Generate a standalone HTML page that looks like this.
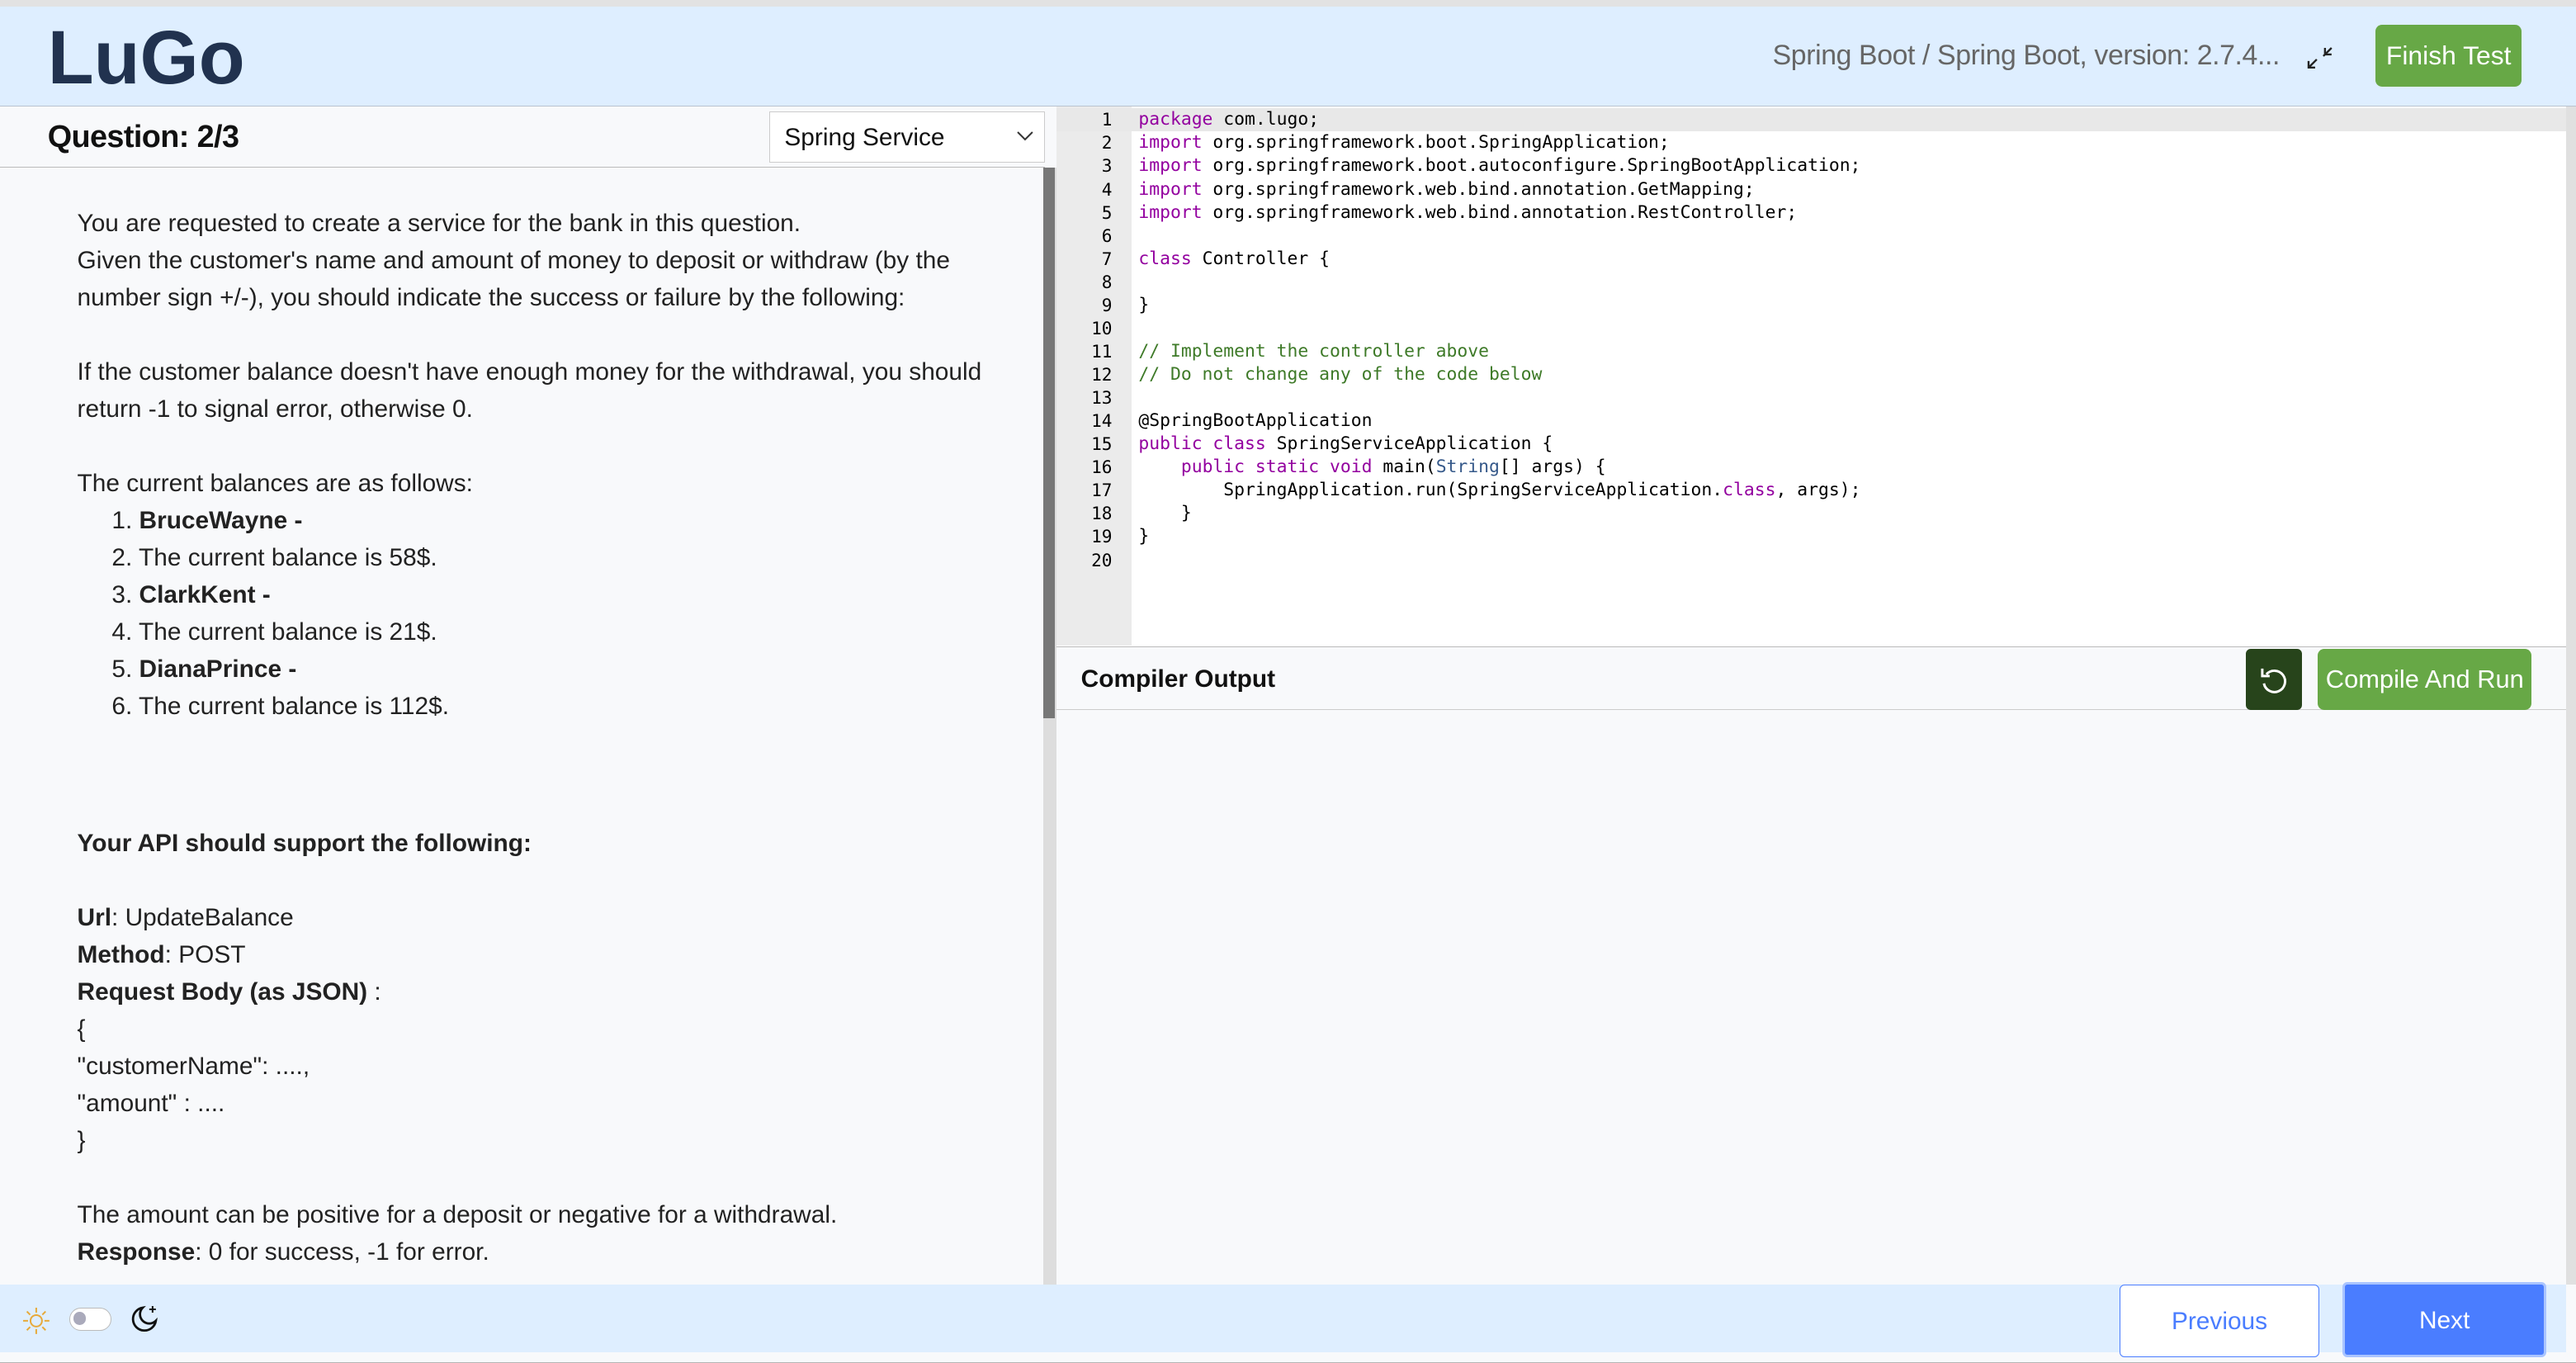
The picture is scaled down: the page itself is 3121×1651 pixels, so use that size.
<!DOCTYPE html>
<html><head><meta charset="utf-8"><style>
*{box-sizing:border-box;margin:0;padding:0}
html,body{width:3121px;height:1651px;overflow:hidden;background:#b5b5b5}
#w{zoom:1.9904;width:1568px;height:829px;position:relative;font-family:"Liberation Sans",sans-serif;background:#f8f9fb}
.abs{position:absolute}
#top{left:0;top:0;width:1568px;height:4px;background:#e2e2e2}
#hdr{left:0;top:4px;width:1568px;height:61px;background:#deeeff;border-bottom:1px solid #b9c3cf}
#logo{left:29px;top:9px;font-size:46px;font-weight:bold;color:#21324f;letter-spacing:0px}
#ver{left:1079px;top:24px;font-size:17px;color:#666;letter-spacing:-0.2px}
#fin{left:1446px;top:15px;width:89px;height:38px;background:#67a846;border-radius:4px;color:#fff;font-size:16px;text-align:center;line-height:38px}
#qbar{left:0;top:65px;width:636px;height:37px;background:#f8f9fb;border-bottom:1px solid #bbb}
#qt{left:29px;top:73px;font-size:19px;font-weight:bold;color:#111;letter-spacing:-0.3px}
#sel{left:468px;top:68px;width:168px;height:31px;background:#fff;border:1px solid #ccc;font-size:15px;padding:7px 0 0 9px;color:#111}
#cont{left:47px;top:125px;width:570px;font-size:15px;line-height:22.6px;color:#222}
#cont p{margin:0}
#sb{left:635px;top:102px;width:8px;height:680px;background:#ddd}
#sbt{left:635px;top:102px;width:7px;height:335px;background:#777}
#ed{left:643px;top:65px;width:919px;height:329px;background:#fff;border-bottom:1px solid #bbb}
#gut{left:643px;top:65px;width:46px;height:328px;background:#ebebeb}
#act{left:643px;top:66px;width:919px;height:14px;background:#e8e8e8}
pre{font-family:"DejaVu Sans Mono","Liberation Mono",monospace;font-size:10.6px;line-height:14.1px;color:#000}
#ln{left:650px;top:66px;width:27px;text-align:right}
#code{left:693px;top:66px;font-size:10.75px}
.k{color:#93009f}.c{color:#3e7a28}.t{color:#36598a}
#cobar{left:643px;top:394px;width:919px;height:38px;background:#f8f9fb;border-bottom:1px solid #ccc}
#cot{left:658px;top:405px;font-size:15px;font-weight:bold;color:#111}
#rst{left:1367px;top:395px;width:34px;height:37px;background:#27441b;border-radius:3px}
#cr{left:1411px;top:395px;width:130px;height:37px;background:#67a846;border-radius:4px;color:#fff;font-size:15.5px;text-align:center;line-height:37px}
#out{left:643px;top:432px;width:919px;height:350px;background:#f8f9fb}
#rs{left:1562px;top:65px;width:6px;height:717px;background:#e0e0e0}
#ftr{left:0;top:782px;width:1562px;height:41px;background:#deeeff}
#prev{left:1290px;top:782px;width:122px;height:44px;background:#fff;border:1px solid #4a7dff;border-radius:3px;color:#4a7dff;font-size:15px;text-align:center;line-height:44px}
#next{left:1426px;top:780px;width:124px;height:46px;background:#4a7dff;border:2px solid #a9c4ff;border-radius:3px;color:#fff;font-size:15px;text-align:center;line-height:44px}
#tog{left:42px;top:796px;width:26px;height:14px;border:1px solid #bbb;border-radius:7px;background:#fff}
#tog:after{content:"";position:absolute;left:2px;top:2px;width:8px;height:8px;border-radius:50%;background:#aab}
</style></head><body><div id="w">
<div id="top" class="abs"></div>
<div id="hdr" class="abs"></div>
<div id="logo" class="abs">LuGo</div>
<div id="ver" class="abs">Spring Boot / Spring Boot, version: 2.7.4...</div>
<svg class="abs" style="left:1403px;top:27px" width="18" height="16" viewBox="0 0 18 16"><path d="M2 14l5-5M2 10v4h4M16 2l-5 5M16 6h-4V2" stroke="#222" stroke-width="1.2" fill="none"/></svg>
<div id="fin" class="abs">Finish Test</div>
<div id="qbar" class="abs"></div>
<div id="qt" class="abs">Question: 2/3</div>
<div id="sel" class="abs">Spring Service<svg style="position:absolute;right:6px;top:11px" width="11" height="7"><path d="M1 1l4.5 4.5L10 1" stroke="#333" fill="none"/></svg></div>
<div id="cont" class="abs">
<p>You are requested to create a service for the bank in this question.<br>Given the customer's name and amount of money to deposit or withdraw (by the number sign +/-), you should indicate the success or failure by the following:</p><br>
<p>If the customer balance doesn't have enough money for the withdrawal, you should return -1 to signal error, otherwise 0.</p><br>
<p>The current balances are as follows:</p>
<div style="padding-left:21px">1. <b>BruceWayne -</b><br>2. The current balance is 58$.<br>3. <b>ClarkKent -</b><br>4. The current balance is 21$.<br>5. <b>DianaPrince -</b><br>6. The current balance is 112$.</div>
<div style="height:61px"></div>
<p><b>Your API should support the following:</b></p><br>
<p><b>Url</b>: UpdateBalance<br><b>Method</b>: POST<br><b>Request Body (as JSON)</b> :<br>{<br>"customerName": ....,<br>"amount" : ....<br>}</p><br>
<p>The amount can be positive for a deposit or negative for a withdrawal.<br><b>Response</b>: 0 for success, -1 for error.</p>
</div>
<div id="sb" class="abs"></div><div id="sbt" class="abs"></div>
<div id="ed" class="abs"></div><div id="gut" class="abs"></div><div id="act" class="abs"></div>
<pre id="ln" class="abs">1
2
3
4
5
6
7
8
9
10
11
12
13
14
15
16
17
18
19
20</pre>
<pre id="code" class="abs"><span class="k">package</span> com.lugo;
<span class="k">import</span> org.springframework.boot.SpringApplication;
<span class="k">import</span> org.springframework.boot.autoconfigure.SpringBootApplication;
<span class="k">import</span> org.springframework.web.bind.annotation.GetMapping;
<span class="k">import</span> org.springframework.web.bind.annotation.RestController;

<span class="k">class</span> Controller {

}

<span class="c">// Implement the controller above</span>
<span class="c">// Do not change any of the code below</span>

@SpringBootApplication
<span class="k">public class</span> SpringServiceApplication {
    <span class="k">public static void</span> main(<span class="t">String</span>[] args) {
        SpringApplication.run(SpringServiceApplication.<span class="k">class</span>, args);
    }
}
</pre>
<div id="cobar" class="abs"></div>
<div id="cot" class="abs">Compiler Output</div>
<div id="rst" class="abs"><svg width="34" height="37" viewBox="0 0 34 37"><path d="M12.5 15.5A6.5 6.5 0 1 1 11 21" stroke="#fff" stroke-width="1.5" fill="none"/><path d="M10 12v4.5h4.5" stroke="#fff" stroke-width="1.5" fill="none"/></svg></div>
<div id="cr" class="abs">Compile And Run</div>
<div id="out" class="abs"></div>
<div id="rs" class="abs"></div>
<div id="ftr" class="abs"></div>
<svg class="abs" style="left:13px;top:795px" width="18" height="18" viewBox="0 0 18 18"><circle cx="9" cy="9" r="3.5" stroke="#e7a93a" fill="none"/><path d="M9 1v3M9 14v3M1 9h3M14 9h3M3.3 3.3l2 2M12.7 12.7l2 2M3.3 14.7l2-2M12.7 5.3l2-2" stroke="#e7a93a"/></svg>
<div id="tog" class="abs"></div>
<svg class="abs" style="left:78px;top:793px" width="20" height="20" viewBox="0 0 20 20"><path d="M9 3a7 7 0 1 0 8 8 5.5 5.5 0 0 1-8-8z" stroke="#111" stroke-width="1.4" fill="none"/><path d="M15 2v4M13 4h4" stroke="#111"/></svg>
<div id="prev" class="abs">Previous</div>
<div id="next" class="abs">Next</div>
</div></body></html>
